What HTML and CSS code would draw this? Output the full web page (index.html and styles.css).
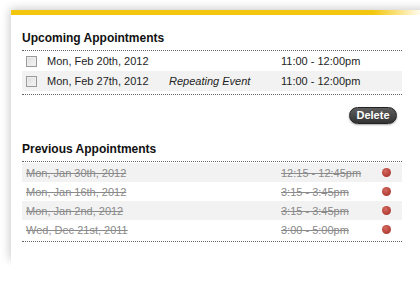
FILE: index.html
```html
<!DOCTYPE html>
<html>
<head>
<meta charset="utf-8">
<link rel="stylesheet" href="styles.css">
</head>
<body>
<div class="card">
  <div class="bar"></div>
  <div class="content">
    <h2 class="heading">Upcoming Appointments</h2>
    <div class="list upcoming">
      <div class="row">
        <span class="chk"><span class="box"></span></span>
        <span class="date">Mon, Feb 20th, 2012</span>
        <span class="note"></span>
        <span class="time">11:00 - 12:00pm</span>
      </div>
      <div class="row alt">
        <span class="chk"><span class="box"></span></span>
        <span class="date">Mon, Feb 27th, 2012</span>
        <span class="note">Repeating Event</span>
        <span class="time">11:00 - 12:00pm</span>
      </div>
    </div>
    <div class="actions"><button class="btn">Delete</button></div>
    <h2 class="heading">Previous Appointments</h2>
    <div class="list previous">
      <div class="row alt"><span class="pdate">Mon, Jan 30th, 2012</span><span class="ptime">12:15 - 12:45pm</span><span class="dot"></span></div>
      <div class="row"><span class="pdate">Mon, Jan 16th, 2012</span><span class="ptime">3:15 - 3:45pm</span><span class="dot"></span></div>
      <div class="row alt"><span class="pdate">Mon, Jan 2nd, 2012</span><span class="ptime">3:15 - 3:45pm</span><span class="dot"></span></div>
      <div class="row"><span class="pdate">Wed, Dec 21st, 2011</span><span class="ptime">3:00 - 5:00pm</span><span class="dot"></span></div>
    </div>
  </div>
</div>
</body>
</html>
```
FILE: styles.css
```css
html, body {
  margin: 0;
  padding: 0;
  background: #fff;
  overflow: hidden;
}
body {
  font-family: "Liberation Sans", Arial, sans-serif;
  font-size: 11px;
  color: #1e1e1e;
  padding-top: 10px;
}
.card {
  margin-left: 11px;
  width: 430px;
  height: 255px;
  background: #fff;
  box-shadow: -3px -3px 9px -2px rgba(0, 0, 0, 0.22);
}
.bar {
  height: 5px;
  background: linear-gradient(to right, #f2c70d 0, #f2c70d 362px, #fbe590 390px, #fef7dc 405px, #fff 412px);
}
.content {
  width: 380px;
  padding: 15px 0 0 11px;
}
.heading {
  margin: 0 0 4px;
  font-size: 12px;
  line-height: 16px;
  font-weight: bold;
  color: #111;
}
.list {
  border-top: 1px dotted #666;
  border-bottom: 1px dotted #666;
}
.upcoming {
  padding: 0 0 3px;
}
.previous {
  padding: 1px 0 2px;
}
.row {
  display: flex;
  align-items: center;
  height: 20px;
  padding-left: 4px;
}
.previous .row {
  height: 19px;
}
.row.alt {
  background: #f2f2f2;
}
.chk {
  width: 21px;
  display: flex;
  align-items: center;
}
.box {
  width: 9px;
  height: 9px;
  border: 1px solid #9a9a9a;
  background: linear-gradient(135deg, #dcdcdc, #f6f6f6);
  box-shadow: inset 0 0 0 1px #eee;
}
.date {
  width: 122px;
}
.note {
  width: 112px;
  font-style: italic;
}
.pdate {
  width: 255px;
}
.ptime {
  width: 101px;
}
.pdate, .ptime {
  color: #8a8a8a;
  text-decoration: line-through;
}
.dot {
  width: 9px;
  height: 9px;
  border-radius: 50%;
  background: radial-gradient(circle at 40% 35%, #d46a60, #b03c34 70%);
}
.actions {
  display: flex;
  justify-content: flex-end;
  padding: 12px 5px 0 0;
  height: 17px;
  margin-bottom: 17px;
}
.btn {
  height: 17px;
  width: 48px;
  padding: 0;
  border: 1px solid #222;
  border-radius: 9px;
  background: linear-gradient(#5e5e5e, #333);
  color: #fff;
  font-family: "Liberation Sans", Arial, sans-serif;
  font-size: 11px;
  font-weight: bold;
  line-height: 15px;
  box-shadow: 0 1px 2px rgba(0, 0, 0, 0.35);
}
```
